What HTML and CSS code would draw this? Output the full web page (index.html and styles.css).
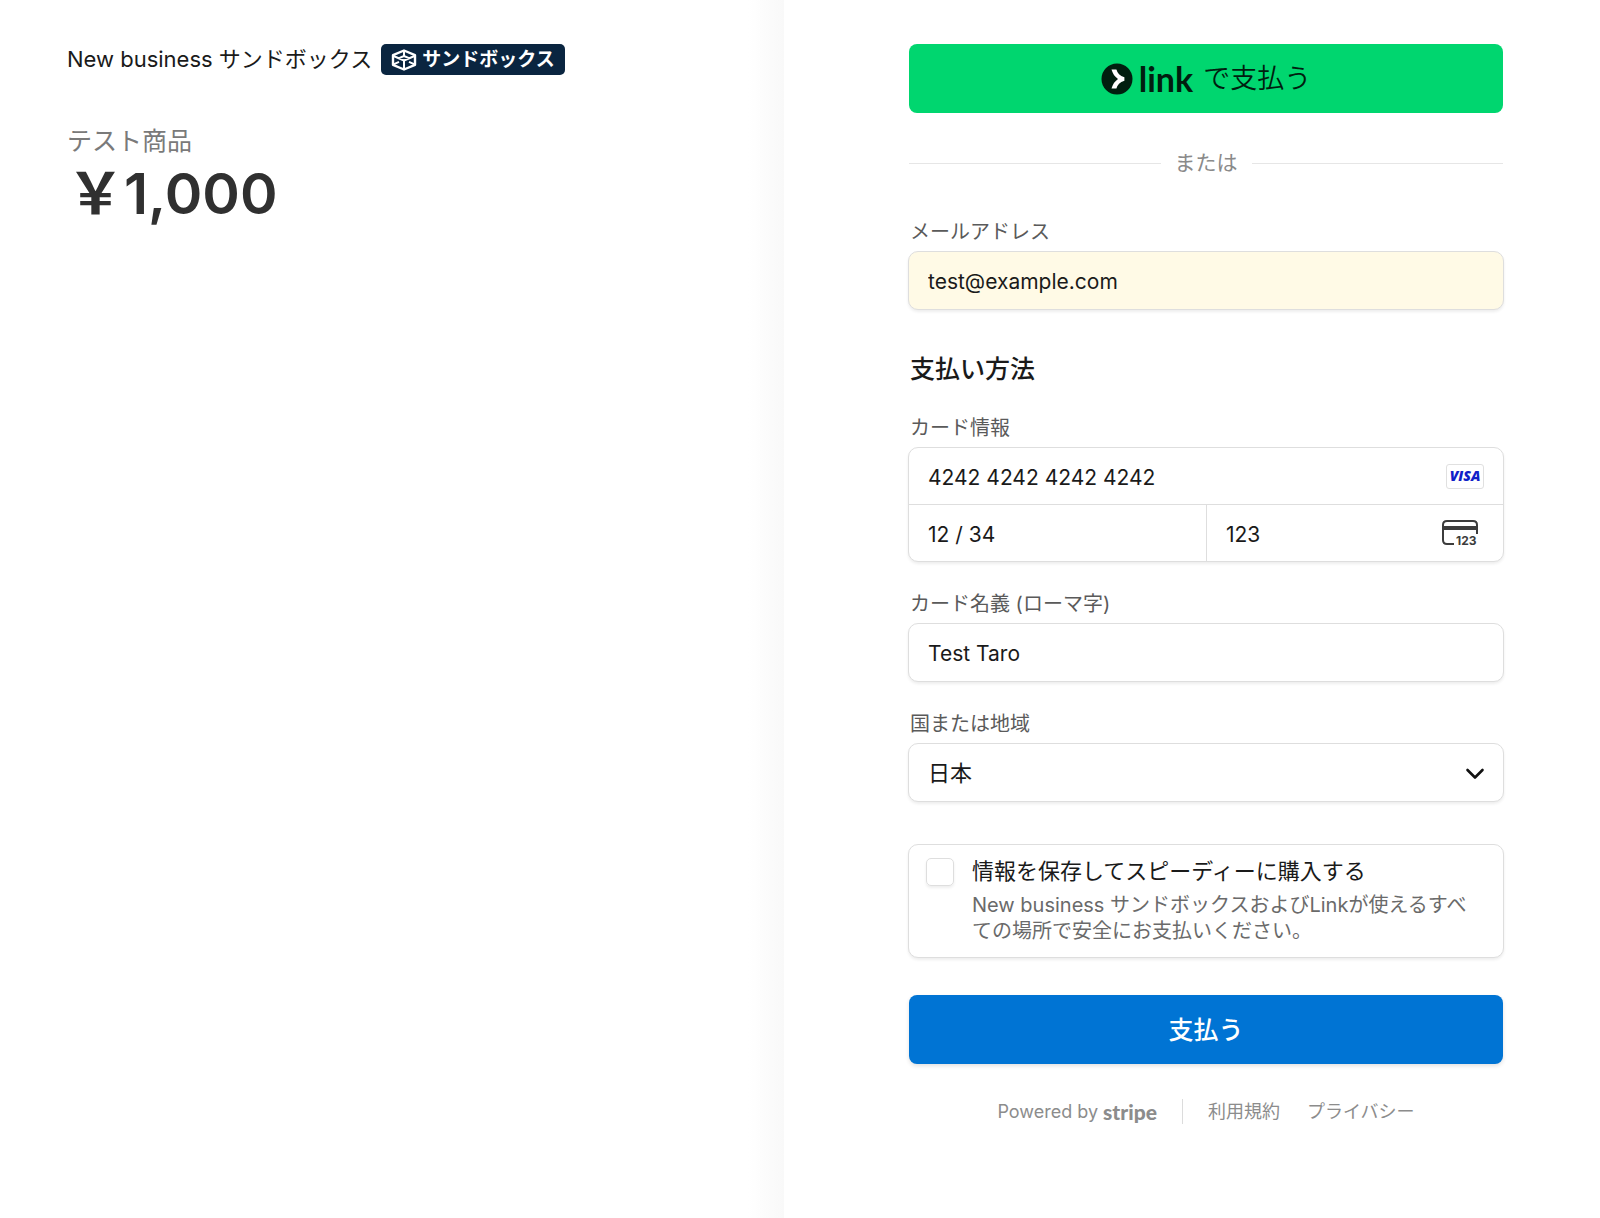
FILE: index.html
```html
<!DOCTYPE html>
<html lang="ja">
<head>
  <meta charset="UTF-8">
  <meta name="viewport" content="width=device-width, initial-scale=1.0">
  <title>New business サンドボックス</title>
  <link rel="stylesheet" href="styles.css">
</head>
<body>
  <div class="checkout">
    <!-- Order summary -->
    <section class="summary">
      <header class="business">
        <span class="business-name">New business サンドボックス</span>
        <span class="badge">
          <svg class="badge-icon" width="26" height="22" viewBox="0 0 26 22" fill="none" stroke="#fff" stroke-width="2.4" stroke-linejoin="round">
            <path d="M13 1.5 24 6.2V15.8L13 20.5 2 15.8V6.2Z"/>
            <path d="M2.5 7 13 11.5 23.5 7M13 2V7M13 11.5V20M2.5 15.4 8 12.8M23.5 15.4 18 12.8M8 9.2 13 7 18 9.2" stroke-width="2"/>
          </svg>
          サンドボックス
        </span>
      </header>
      <p class="product">テスト商品</p>
      <p class="price">￥1,000</p>
    </section>

    <!-- Payment form -->
    <main class="payment">
      <form>
        <button type="button" class="link-button">
          <svg width="32" height="32" viewBox="0 0 32 32">
            <circle cx="16" cy="16" r="15.5" fill="#011e0f"/>
            <path d="M10.5 6.5H15.4C16.4 10 18.8 12.8 23.4 14.2V17.8C18.8 19.2 16.4 22 15.4 25.5H10.5C11.6 21.5 13.8 18.3 17 16 13.8 13.7 11.6 10.5 10.5 6.5Z" fill="#fff"/>
          </svg>
          <span class="link-logo">link</span>
          <span class="link-text">で支払う</span>
        </button>

        <div class="divider">または</div>

        <div class="field">
          <label for="email">メールアドレス</label>
          <input type="email" id="email" class="input autofilled" value="test@example.com">
        </div>

        <h2>支払い方法</h2>

        <div class="field">
          <label for="cardNumber">カード情報</label>
          <div class="card-group">
            <div class="card-row">
              <input type="text" id="cardNumber" value="4242 4242 4242 4242">
              <span class="visa">VISA</span>
            </div>
            <div class="card-row card-bottom">
              <input type="text" id="cardExpiry" aria-label="有効期限" value="12 / 34">
              <div class="card-cvc">
                <input type="text" id="cardCvc" aria-label="セキュリティコード" value="123">
                <svg class="cvc-icon" width="38" height="28" viewBox="0 0 38 28">
                  <path d="M13 25H6Q2 25 2 21V6Q2 2 6 2H32Q36 2 36 6V15" fill="none" stroke="#3c3c3c" stroke-width="2"/>
                  <path d="M2 9H36" stroke="#3c3c3c" stroke-width="4"/>
                  <text x="15" y="26">123</text>
                </svg>
              </div>
            </div>
          </div>
        </div>

        <div class="field">
          <label for="cardName">カード名義 (ローマ字)</label>
          <input type="text" id="cardName" class="input" value="Test Taro">
        </div>

        <div class="field">
          <label for="country">国または地域</label>
          <div class="select-wrap">
            <select id="country" class="input">
              <option selected>日本</option>
            </select>
            <svg class="chevron" width="20" height="12" viewBox="0 0 20 12" fill="none" stroke="#111" stroke-width="2.6" stroke-linecap="round" stroke-linejoin="round">
              <path d="M2.5 2 10 9.5 17.5 2"/>
            </svg>
          </div>
        </div>

        <div class="save-box">
          <input type="checkbox" id="saveInfo">
          <div>
            <label for="saveInfo" class="save-title">情報を保存してスピーディーに購入する</label>
            <p class="save-text">New business サンドボックスおよびLinkが使えるすべての場所で安全にお支払いください。</p>
          </div>
        </div>

        <button type="submit" class="pay-button">支払う</button>
      </form>

      <footer class="footer">
        <a href="#" class="powered">Powered by <span class="stripe">stripe</span></a>
        <a href="#" class="terms">利用規約</a>
        <a href="#" class="privacy">プライバシー</a>
      </footer>
    </main>
  </div>
</body>
</html>
```
FILE: styles.css
```css
* {
  box-sizing: border-box;
}

body {
  margin: 0;
  font-family: Inter, "Noto Sans CJK JP", sans-serif;
  font-size: 22px;
  color: #1a1a1a;
  background: #fff;
}

p, h2 {
  margin: 0;
}

a {
  color: inherit;
  text-decoration: none;
}

input, select, button {
  font-family: inherit;
  color: inherit;
}

.checkout {
  display: grid;
  grid-template-columns: 49% 51%;
  min-height: 100vh;
}

/* Order summary */
.summary {
  padding: 44px 32px 44px 67px;
  background: linear-gradient(to left, #f9f9f9, #fff 36px);
}

.business {
  display: flex;
  align-items: center;
  gap: 9px;
  line-height: 31px;
}

.badge {
  display: flex;
  align-items: center;
  gap: 5px;
  height: 31px;
  padding: 0 10px;
  border-radius: 5px;
  background: #0a2540;
  color: #fff;
  font-size: 19px;
  font-weight: 700;
}

.product {
  margin-top: 48px;
  font-size: 25px;
  line-height: 36px;
  color: #7a7a7a;
}

.price {
  font-size: 57px;
  font-weight: 600;
  line-height: 70px;
  color: #303030;
}

/* Payment form */
.payment {
  padding: 44px 96px 80px 124px;
}

.link-button, .pay-button {
  display: flex;
  align-items: center;
  justify-content: center;
  width: calc(100% - 2px);
  height: 69px;
  margin: 0 1px;
  padding: 0;
  border: none;
  border-radius: 8px;
  cursor: pointer;
}

.link-button {
  background: #00d66f;
  color: #011e0f;
}

.link-logo {
  margin: 0 10px 0 6px;
  font-family: Lato, sans-serif;
  font-size: 34px;
  font-weight: 700;
  line-height: 40px;
}

.link-text {
  font-size: 27px;
  font-weight: 350;
  line-height: 40px;
}

.divider {
  display: flex;
  align-items: center;
  gap: 14px;
  margin: 35px 1px 40px;
  font-size: 21px;
  line-height: 30px;
  color: #8a8a8a;
}

.divider::before, .divider::after {
  content: "";
  flex: 1;
  height: 1px;
  background: #e6e6e6;
}

.field + .field {
  margin-top: 28px;
}

.field label {
  display: block;
  margin: 0 2px 5px;
  font-size: 20px;
  line-height: 28px;
  color: #5a5a5a;
}

.input, .card-group, .save-box {
  width: 100%;
  border: 1px solid #dedede;
  border-radius: 10px;
  background: #fff;
  box-shadow: 0 2px 3px rgba(0, 0, 0, 0.07);
}

.input {
  display: block;
  height: 59px;
  padding: 2px 19px 0;
  font-size: 21px;
  appearance: none;
}

select.input {
  padding-top: 0;
  font-size: 22px;
}

.autofilled {
  background: #fffae6;
}

h2 {
  margin: 42px 2px 28px;
  font-size: 25px;
  font-weight: 500;
  line-height: 34px;
}

.card-group {
  height: 115px;
}

.card-row {
  display: flex;
  align-items: center;
  height: 56px;
  padding-right: 19px;
}

.card-row input {
  flex: 1;
  width: 100%;
  min-width: 0;
  height: 100%;
  padding: 2px 19px 0;
  border: none;
  background: none;
  font-size: 21px;
}

.card-bottom {
  display: grid;
  grid-template-columns: 1fr 1fr;
  height: 57px;
  padding-right: 0;
  border-top: 1px solid #dedede;
}

.card-cvc {
  display: flex;
  align-items: center;
  height: 100%;
  padding-right: 24px;
  border-left: 1px solid #dedede;
}

.visa {
  width: 38px;
  height: 25px;
  border: 1px solid #e0e0e0;
  border-radius: 3px;
  font-family: "Open Sans", sans-serif;
  font-size: 14px;
  font-style: italic;
  font-weight: 800;
  line-height: 22px;
  text-align: center;
  color: #1020c8;
}

.cvc-icon text {
  font-size: 12px;
  font-weight: 700;
  fill: #3c3c3c;
}

.select-wrap {
  position: relative;
}

.chevron {
  position: absolute;
  right: 19px;
  top: 25px;
  pointer-events: none;
}

.save-box {
  display: flex;
  gap: 18px;
  min-height: 114px;
  margin-top: 42px;
  padding: 12px 24px 12px 17px;
}

.save-box input {
  flex: none;
  width: 28px;
  height: 28px;
  margin: 1px 0 0;
  border: 1px solid #dedede;
  border-radius: 5px;
  box-shadow: 0 2px 3px rgba(0, 0, 0, 0.07);
  appearance: none;
}

.save-title {
  display: block;
  line-height: 28px;
}

.save-text {
  margin-top: 7px;
  font-size: 20px;
  line-height: 26px;
  color: #6a6a6a;
}

.pay-button {
  margin-top: 37px;
  padding-bottom: 3px;
  background: #0074d4;
  box-shadow: 0 2px 4px rgba(0, 0, 0, 0.12);
  color: #fff;
  font-size: 25px;
  font-weight: 500;
}

.footer {
  display: flex;
  align-items: center;
  justify-content: center;
  margin-top: 35px;
  font-size: 18px;
  line-height: 25px;
  color: #8c8c8c;
}

.powered {
  display: flex;
  align-items: center;
  gap: 5px;
}

.stripe {
  font-family: Lato, sans-serif;
  font-size: 21px;
  font-weight: 900;
  line-height: 25px;
}

.terms {
  margin: 0 27px 0 25px;
  padding-left: 25px;
  border-left: 1px solid #dcdcdc;
}
```
